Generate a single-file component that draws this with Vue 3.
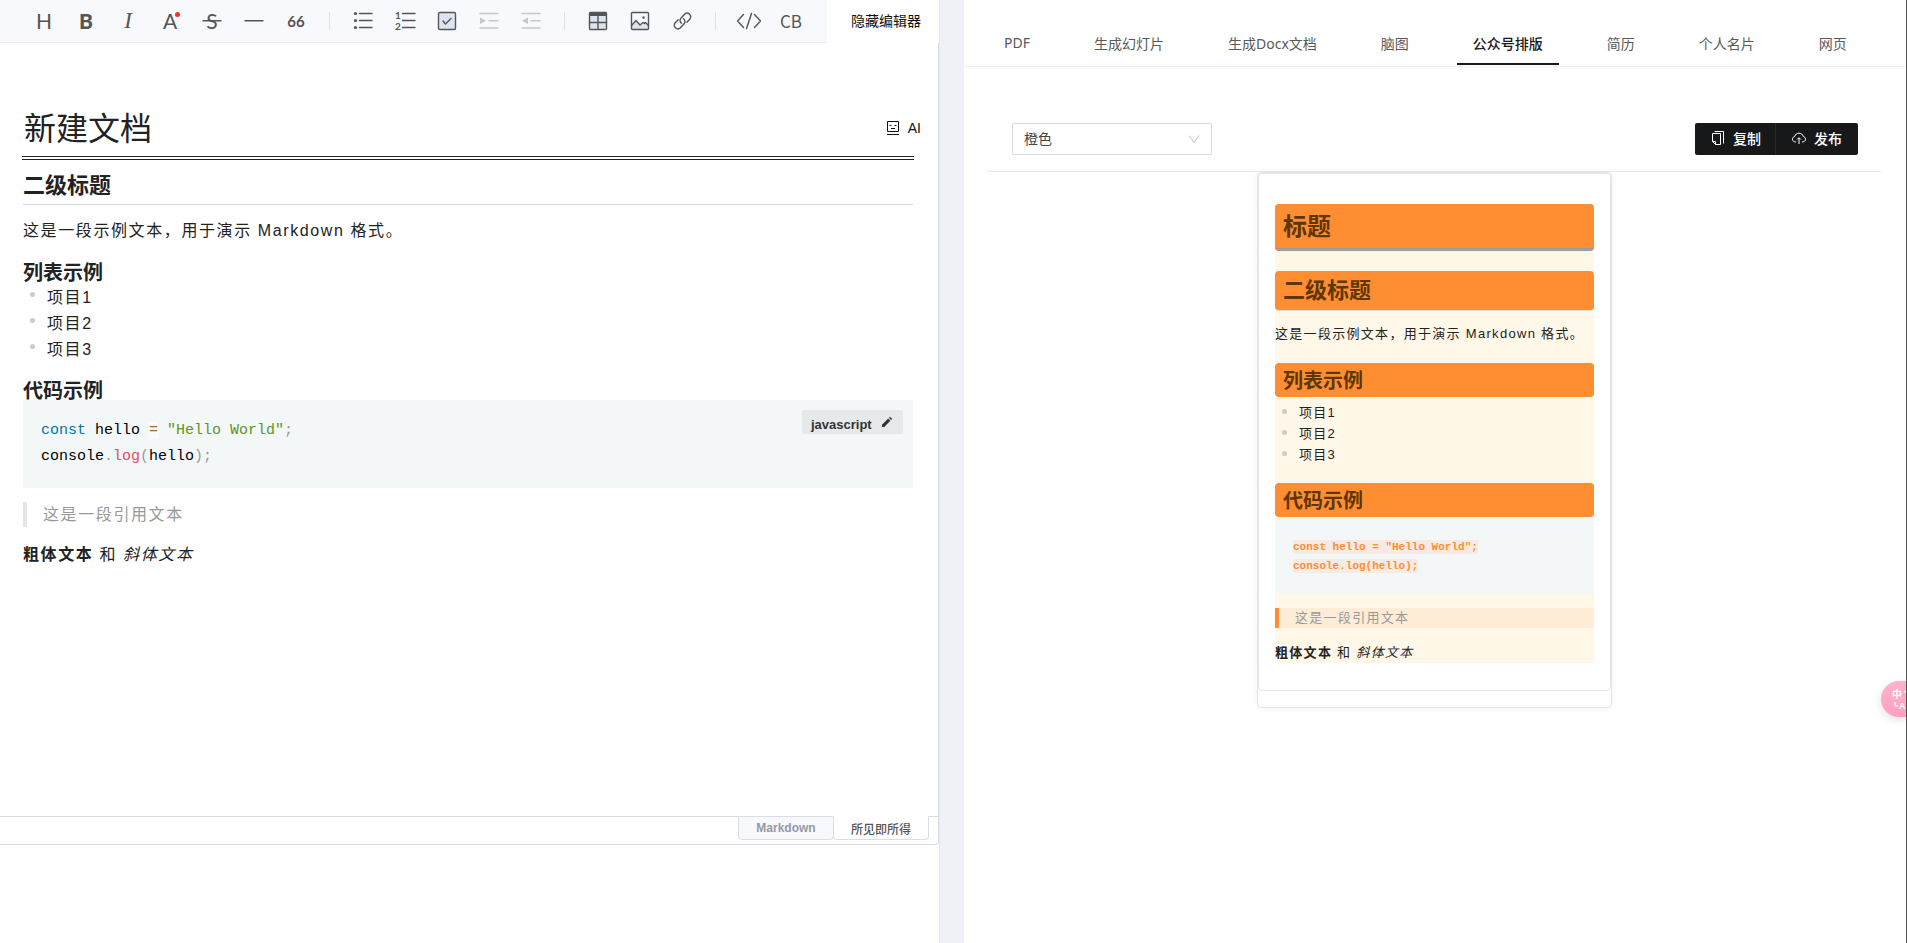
<script setup>
import { ref } from 'vue'

const title = ref('新建文档')
const theme = ref('orange')
const items = ['项目1', '项目2', '项目3']
const tabs = ['PDF', '生成幻灯片', '生成Docx文档', '脑图', '公众号排版', '简历', '个人名片', '网页']
const activeTab = ref('公众号排版')
</script>

<template>
  <div class="app">
    <section class="left">
      <div class="editor">
        <div class="toolbar">
          <div class="tools">
            <button class="tool letter" aria-label="标题">H</button>
            <button class="tool letter bold" aria-label="粗体">B</button>
            <button class="tool letter italic" aria-label="斜体">I</button>
            <button class="tool letter color" aria-label="颜色">A<span class="dot"></span></button>
            <button class="tool letter strike" aria-label="删除线">S
              <svg class="over" viewBox="0 0 32 32"><path d="M7 15.7h18" /></svg>
            </button>
            <button class="tool" aria-label="分割线">
              <svg viewBox="0 0 32 32"><path d="M7 15.7h18" /></svg>
            </button>
            <button class="tool letter quote" aria-label="引用">66</button>
            <span class="sep"></span>
            <button class="tool" aria-label="无序列表">
              <svg viewBox="0 0 32 32">
                <path d="M12.5 8.5h12.5M12.5 15.5h12.5M12.5 22.5h12.5" />
                <g class="solid"><circle cx="8.5" cy="8.5" r="1.6" /><circle cx="8.5" cy="15.5" r="1.6" /><circle cx="8.5" cy="22.5" r="1.6" /></g>
              </svg>
            </button>
            <button class="tool" aria-label="有序列表">
              <svg viewBox="0 0 32 32">
                <path d="M13.5 8.5h12.5M13.5 15.5h12.5M13.5 22.5h12.5" />
                <text x="6" y="13.5">1</text><text x="6" y="24.5">2</text>
              </svg>
            </button>
            <button class="tool" aria-label="任务">
              <svg viewBox="0 0 32 32"><rect class="tint" x="7.5" y="7.5" width="17" height="17" rx="1.5" /><path d="M12 16l2.500 3 5.500-5.500" /></svg>
            </button>
            <button class="tool muted" aria-label="增加缩进">
              <svg viewBox="0 0 32 32"><path d="M7 8.5h18M7 23h18M16 15.7h9" /><path class="solid" d="M7 12.5l6 3.2-6 3.2z" /></svg>
            </button>
            <button class="tool muted" aria-label="减少缩进">
              <svg viewBox="0 0 32 32"><path d="M7 8.5h18M7 23h18M16 15.7h9" /><path class="solid" d="M13 12.5l-6 3.2 6 3.2z" /></svg>
            </button>
            <span class="sep"></span>
            <button class="tool" aria-label="表格">
              <svg viewBox="0 0 32 32"><rect class="tint" x="7.5" y="7.5" width="17" height="17" rx="1" /><path class="solid" d="M7.5 7.5h17v3.5h-17z" /><path d="M7.5 17.5h17M16 11v13.5" /></svg>
            </button>
            <button class="tool" aria-label="图片">
              <svg viewBox="0 0 32 32">
                <path class="fill-tint" d="M8 20l4-4 4 4 4-3 5 3v4H8z" />
                <rect x="7.5" y="7.5" width="17" height="17" rx="1" /><path d="M7.5 20.5l4.5-5 4 4.500 3-2.500 1.500 1 1-1 3 3" /><circle class="solid" cx="19.500" cy="12.500" r="1.200" />
              </svg>
            </button>
            <button class="tool" aria-label="链接">
              <svg viewBox="0 0 32 32"><path d="M15.500 18.200c-1.800-1.500-2-3.700-.4-5.300l3.200-3.400c1.600-1.700 3.800-1.700 5.300-.3s1.500 3.600-.1 5.300l-2.600 2.800M17.500 13.800c1.800 1.500 2 3.700.4 5.300l-3.200 3.400c-1.600 1.700-3.800 1.700-5.300.3s-1.500-3.600.1-5.300l2.600-2.800" /></svg>
            </button>
            <span class="sep"></span>
            <button class="tool" aria-label="行内代码">
              <svg viewBox="0 0 32 32"><path d="M10.500 9.500l-6 6.500 6 6.500M21.500 9.500l6 6.500-6 6.500M18.500 8.500l-5 15" /></svg>
            </button>
            <button class="tool letter cb" aria-label="代码块">CB</button>
          </div>
          <button class="hide">隐藏编辑器</button>
        </div>

        <div class="canvas">
          <div class="title-row">
            <input v-model="title" class="title" aria-label="文档标题" />
            <button class="ai">
              <svg viewBox="0 0 14 14"><path d="M1.500 .5h11v10h-11zM1 13.500h12M5 7.500h4" /><path d="M3.500 4.500h2M8.500 4.500h2" /></svg>
              AI
            </button>
          </div>
          <article class="doc">
            <h2>二级标题</h2>
            <p>这是一段示例文本，用于演示 Markdown 格式。</p>
            <h3>列表示例</h3>
            <ul><li v-for="i in items" :key="i">{{ i }}</li></ul>
            <h3>代码示例</h3>
            <div class="code">
              <pre><code><span class="kw">const</span> hello <span class="op">=</span> <span class="str">"Hello World"</span><span class="pun">;</span>
console<span class="pun">.</span><span class="fn">log</span><span class="pun">(</span>hello<span class="pun">);</span></code></pre>
              <button class="lang">javascript
                <svg viewBox="0 0 12 12"><path d="M1 11V8.800L7.200 2.600l2.200 2.200L3.200 11zM8 1.800l1-1 2.200 2.200-1 1z" /></svg>
              </button>
            </div>
            <blockquote>这是一段引用文本</blockquote>
            <p><strong>粗体文本</strong> 和 <em>斜体文本</em></p>
          </article>
        </div>

        <div class="modes">
          <button class="mode">Markdown</button>
          <button class="mode on">所见即所得</button>
        </div>
      </div>
    </section>

    <div class="gutter"></div>

    <section class="right">
      <nav class="tabs">
        <button v-for="t in tabs" :key="t" class="tab" :class="{ active: t === activeTab }" @click="activeTab = t">{{ t }}</button>
      </nav>
      <div class="panel">
        <div class="actions">
          <div class="select">
            <select v-model="theme" aria-label="主题颜色"><option value="orange">橙色</option></select>
            <svg viewBox="0 0 12 12"><path d="M1 2.500l5 7 5-7" /></svg>
          </div>
          <div class="buttons">
            <button>
              <svg viewBox="0 0 14 14"><path d="M1.500 2.500h8v11h-5l-3-3zM1.500 10.500h3v3M3.500 .5h9v12" /></svg>
              复制
            </button>
            <button>
              <svg viewBox="0 0 14 14"><path d="M4 11c-2 0-3.500-1-3.500-2.700S1.700 5.700 2.700 5.500C3.300 3.300 5 2.200 7 2.200s3.700 1.100 4.300 3.300c1 .2 2.200 1.100 2.200 2.800S12 11 10 11M7 13V7M5.200 8.500L7 6.700l1.800 1.800" /></svg>
              发布
            </button>
          </div>
        </div>
        <div class="phone">
          <div class="sheet">
            <article class="preview">
              <h1>标题</h1>
              <h2>二级标题</h2>
              <p>这是一段示例文本，用于演示 Markdown 格式。</p>
              <h3>列表示例</h3>
              <ul><li v-for="i in items" :key="i">{{ i }}</li></ul>
              <h3>代码示例</h3>
              <pre><code>const hello = "Hello World";
console.log(hello);</code></pre>
              <blockquote>这是一段引用文本</blockquote>
              <p><strong>粗体文本</strong> 和 <em>斜体文本</em></p>
            </article>
          </div>
        </div>
      </div>
      <button class="translate" aria-label="翻译">
        <svg viewBox="0 0 25 36">
          <text x="11" y="17">中</text>
          <text x="18" y="28" class="latin">A</text>
          <path d="M23 10.500h2M14 21v2q0 2 2 2h1" />
        </svg>
      </button>
    </section>
  </div>
</template>

<style>
body { background: #fff; }
</style>

<style scoped>
.app {
  display: grid;
  grid-template-columns: minmax(0, 939fr) 25px minmax(0, 943fr);
  min-height: 100vh;
  font-family: "Liberation Sans", "Noto Sans CJK SC", sans-serif;
  font-size: 14px;
  color: #222;
}
.app *, .app *::before { box-sizing: border-box; }
button { border: 0; padding: 0; margin: 0; background: none; font: inherit; color: inherit; cursor: pointer; }
h1, h2, h3, p, ul, pre, blockquote { margin: 0; padding: 0; }
ul { list-style: none; }
svg { fill: none; stroke: currentColor; display: block; }

.left { display: flex; flex-direction: column; padding-bottom: 98px; }
.editor {
  flex: 1;
  display: flex;
  flex-direction: column;
  border: solid #dadde6;
  border-width: 0 1px 1px 0;
  border-radius: 0 0 4px 0;
}
.toolbar { display: flex; height: 43px; margin-right: -1px; background: #fff; }
.tools {
  flex: 1;
  display: flex;
  align-items: center;
  padding: 0 5px 0 23px;
  background: #f7f9fc;
  border-bottom: 1px solid #ebedf2;
  color: #555;
}
.tool { position: relative; width: 32px; height: 32px; margin: 0 5px; flex: none; }
.tool svg { width: 32px; height: 32px; stroke-width: 1.400; stroke-linecap: round; stroke-linejoin: round; }
.tool .solid { fill: currentColor; stroke: none; }
.tool .tint { fill: #dde3f0; }
.tool .fill-tint { fill: #dde3f0; stroke: none; }
.tool text { font: 700 10px Lato, sans-serif; fill: currentColor; stroke: none; }
.tool .over { position: absolute; inset: 0; }
.muted { color: #c6c8cc; }
.letter { font: 400 21px/32px Lato, sans-serif; }
.bold { font-weight: 900; }
.italic { font: italic 400 23px/32px "Liberation Serif", serif; }
.quote { font-weight: 700; font-size: 15px; }
.cb { font: 400 17px/32px "Liberation Sans Narrow", "Noto Sans CJK SC", sans-serif; }
.dot { position: absolute; top: 7px; right: 6px; width: 5px; height: 5px; border-radius: 50%; background: #ff2d2d; }
.sep { width: 1px; height: 18px; margin: 0 12px; background: #dfe2ea; flex: none; }
.hide { width: 112px; padding: 0 0 4px 6px; color: #111; }

.canvas { flex: 1; padding: 55px 24px 0 22px; }
.title-row { position: relative; padding-bottom: 2px; border-bottom: 1px solid #222; }
.title {
  display: block;
  width: 100%;
  height: 59px;
  padding: 0 2px 2px;
  border: 0;
  border-bottom: 1px solid #222;
  outline: 0;
  background: none;
  font: 400 32px "Noto Sans CJK SC", sans-serif;
  color: #222;
}
.ai { position: absolute; right: -7px; top: 20px; display: flex; align-items: center; gap: 8px; line-height: 20px; color: #111; }
.ai svg { width: 14px; height: 14px; }
.doc { margin: 0 1px; letter-spacing: 0.1em; font-size: 16px; line-height: 26px; }
.doc h2 { margin-top: 7px; font-size: 22px; line-height: 37px; letter-spacing: normal; border-bottom: 1px solid #dbdbdb; }
.doc p { margin-top: 13px; }
.doc h3 { margin-top: 17px; font-size: 20px; line-height: 24px; letter-spacing: normal; }
.doc ul + h3 { margin-top: 16px; }
li { position: relative; padding-left: 24px; }
li::before { content: ""; position: absolute; left: 7px; top: 7px; width: 5px; height: 5px; border-radius: 50%; background: #ccc; }
.code { position: relative; margin-top: -3px; padding: 18px; background: #f4f7f8; color: #000; }
.code pre { font: 15px/26px "Liberation Mono", monospace; letter-spacing: normal; }
code { font-family: inherit; }
.kw { color: #07a; }
.op { color: #9a6e3a; background: rgba(255, 255, 255, 0.5); }
.str { color: #5c9620; }
.pun { color: #999; }
.fn { color: #e8496a; }
.lang {
  position: absolute; right: 10px; top: 10px;
  display: flex; justify-content: space-between;
  width: 101px; height: 24px; padding: 4px 10px 0 9px;
  background: #e5e9ea; border-radius: 2px;
  font-size: 13px; font-weight: 700; line-height: 22px; color: #333;
}
.lang svg { width: 12px; height: 12px; margin-top: 2px; fill: currentColor; stroke: none; }
.doc blockquote { margin-top: 14px; padding-left: 16px; border-left: 4px solid #e5e5e5; line-height: 25px; color: #999; }
.doc blockquote + p { margin-top: 15px; }
.modes { display: flex; justify-content: flex-end; height: 28px; padding-right: 9px; position: relative; }
.modes::before { content: ""; position: absolute; inset: 0 0 auto; height: 1px; background: #dadde6; }
.mode {
  position: relative;
  width: 96px; height: 24px; border: 1px solid #dadde6; border-radius: 0 0 4px 4px;
  background: #f7f9fc; font-size: 12px; font-weight: 700; color: #969aa5;
}
.mode.on { margin-left: -1px; border-top-color: #fff; background: #fff; font-weight: 500; color: #555; }

.gutter { background: #f0f1f6; border-left: 1px solid #e6e7ee; }

.right { position: relative; border-right: 1px solid #555; }
.tabs { display: flex; gap: 32px; height: 67px; padding: 22px 24px 1px; border-bottom: 1px solid #f0f0f0; }
.tab { flex: none; padding: 0 16px; border-bottom: 2px solid transparent; color: #595959; white-space: nowrap; font-family: "Noto Sans", "Noto Sans CJK SC", sans-serif; }
.tab.active { border-color: #17181a; color: #17181a; font-weight: 500; }
.panel { padding: 56px 25px 0 24px; }
.actions { display: flex; justify-content: space-between; padding: 0 23px 16px 24px; border-bottom: 1px solid #e8e8e8; }
.select { position: relative; width: 200px; }
.select select {
  appearance: none; width: 100%; height: 32px; padding: 0 11px;
  border: 1px solid #d9d9d9; border-radius: 2px; background: #fff;
  font: inherit; color: #444;
}
.select svg { position: absolute; right: 12px; top: 10px; width: 12px; height: 12px; color: #bfbfbf; pointer-events: none; }
.buttons { display: flex; background: #17181a; border-radius: 2px; }
.buttons button { display: flex; align-items: center; gap: 8px; height: 32px; padding: 0 16px 2px; color: #fff; font-weight: 500; }
.buttons button + button { margin-left: -1px; box-shadow: -1px 0 #2b2c2e; }
.buttons svg { width: 14px; height: 14px; }

.phone {
  width: 355px; margin: 0 auto; padding-bottom: 16px;
  border: 1px solid #e5e5e5; border-radius: 4px; box-shadow: 0 0 8px rgba(0, 0, 0, 0.050);
}
.sheet { padding: 30px 16px 27px; border: 1px solid #e5e5e5; border-radius: 4px; }
.preview { background: #fff7e8; font-size: 13px; line-height: 21px; letter-spacing: 0.1em; }
.preview h1, .preview h2, .preview h3 { padding: 0 8px; border-radius: 4px; background: #ff8e32; color: #5d3600; letter-spacing: normal; }
.preview h1 { padding-top: 2px; font-size: 24px; line-height: 42px; border-bottom: 3px double #999; }
.preview h2 { margin-top: 20px; font-size: 22px; line-height: 39px; border-bottom: 1px solid #dbdbdb; }
.preview h3 { margin-top: 19px; padding-top: 2px; font-size: 20px; line-height: 32px; }
.preview p { margin-top: 12px; }
.preview ul { margin-top: 5px; }
.preview ul + h3 { margin-top: 18px; }
.preview pre { margin-top: 2px; padding: 19px 18px 18px; background: #f4f7f8; font: 700 11px/19px "Liberation Mono", monospace; letter-spacing: normal; color: #ff8e32; }
.preview code { padding: 1px 0; border-radius: 2px; background: #f7eae2; }
.preview blockquote { margin-top: 14px; padding-left: 16px; border-left: 4px solid #ff8e32; background: #ffecd6; line-height: 20px; color: #999; }
.preview blockquote + p { margin-top: 14px; }

.translate {
  position: absolute; right: 0; top: 681px; width: 25px; height: 36px;
  border-radius: 18px 0 0 18px; background: linear-gradient(#ffb3cc, #ff9fbe);
  box-shadow: 0 3px 8px rgba(0, 0, 0, 0.120); overflow: hidden;
}
.translate svg { width: 25px; height: 36px; stroke: #fff; stroke-width: 1.500; }
.translate text { font: 700 10px "Noto Sans CJK SC", sans-serif; fill: #fff; stroke: none; }
.translate .latin { font: 700 9px "Liberation Sans", sans-serif; }
</style>
